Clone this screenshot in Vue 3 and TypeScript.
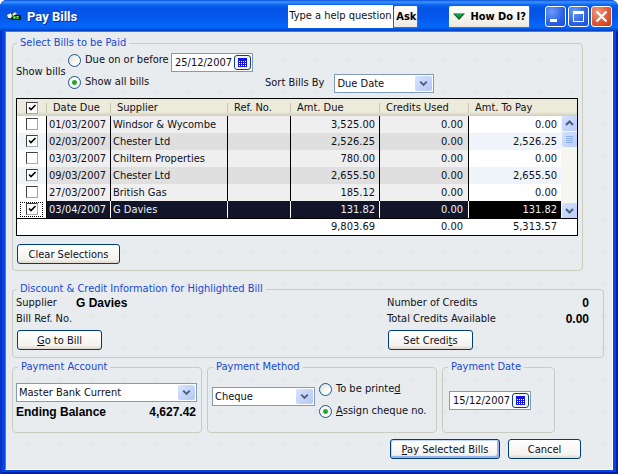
<script setup lang="ts">
import { computed, ref } from 'vue'

interface Bill {
  paid: boolean
  due: string
  supplier: string
  refNo: string
  amount: string
  credits: string
  toPay: string
}

const bills = ref<Bill[]>([
  { paid: false, due: '01/03/2007', supplier: 'Windsor & Wycombe', refNo: '', amount: '3,525.00', credits: '0.00', toPay: '0.00' },
  { paid: true, due: '02/03/2007', supplier: 'Chester Ltd', refNo: '', amount: '2,526.25', credits: '0.00', toPay: '2,526.25' },
  { paid: false, due: '03/03/2007', supplier: 'Chiltern Properties', refNo: '', amount: '780.00', credits: '0.00', toPay: '0.00' },
  { paid: true, due: '09/03/2007', supplier: 'Chester Ltd', refNo: '', amount: '2,655.50', credits: '0.00', toPay: '2,655.50' },
  { paid: false, due: '27/03/2007', supplier: 'British Gas', refNo: '', amount: '185.12', credits: '0.00', toPay: '0.00' },
  { paid: true, due: '03/04/2007', supplier: 'G Davies', refNo: '', amount: '131.82', credits: '0.00', toPay: '131.82' },
])

const current = ref(5)
const selectAll = ref(true)
const help = ref('Type a help question')
const show = ref('all')
const dueBefore = ref('25/12/2007')
const sortBy = ref('Due Date')
const account = ref('Master Bank Current')
const method = ref('Cheque')
const cheque = ref('assign')
const payDate = ref('15/12/2007')

const highlighted = computed(() => bills.value[current.value])

function clearSelections(): void {
  selectAll.value = false
  bills.value.forEach((b) => (b.paid = false))
}
</script>

<template>
  <div class="window">
    <header class="titlebar">
      <svg class="app-icon" width="15" height="11" viewBox="0 0 15 11" aria-hidden="true">
        <path d="M0 5 L4 2 L8 1 L10 4 L14 4 L14 9 L5 9 L3 7 L1 8 Z" fill="#101810" />
        <path d="M0 4 L4 2 L5 5 L4 7 L1 7 Z" fill="#f4f4ec" />
        <path d="M5 3 L8 1 L10 3 L6 5 Z" fill="#d8e4d0" />
        <path d="M5 5 H12 V8 H6 Z" fill="#2f9a3a" />
        <path d="M7 6 H8 V7 H7 Z M10 5 H11 V6 H10 Z" fill="#c8f0c0" />
      </svg>
      <h1>Pay Bills</h1>
      <div class="help">
        <input v-model="help" class="help-input" type="text" aria-label="Help question" />
        <button type="button" class="ask">Ask</button>
      </div>
      <button type="button" class="how">
        <svg width="12" height="7" viewBox="0 0 12 7" aria-hidden="true">
          <path d="M0 .5 H12 L6 7 Z" fill="#0c5c28" />
          <path d="M2 1 H10 L6 5 Z" fill="#12a04a" />
        </svg>
        How Do I?
      </button>
      <div class="controls">
        <button type="button" class="ctl" aria-label="Minimize">
          <svg width="18" height="18" viewBox="0 0 18 18"><path d="M4 12 H11 V15 H4 Z" fill="#fff" /></svg>
        </button>
        <button type="button" class="ctl" aria-label="Maximize">
          <svg width="18" height="18" viewBox="0 0 18 18"><path d="M4 4 H15 V15 H4 Z M5 7 V14 H14 V7 Z" fill="#fff" fill-rule="evenodd" /></svg>
        </button>
        <button type="button" class="ctl close" aria-label="Close">
          <svg width="18" height="18" viewBox="0 0 18 18"><path d="M4.500 4.500 L14.500 14.500 M14.500 4.500 L4.500 14.500" stroke="#fff" stroke-width="2.200" /></svg>
        </button>
      </div>
    </header>

    <main class="client">
      <fieldset class="bills">
        <legend>Select Bills to be Paid</legend>
        <div class="filters">
          <span class="show">Show bills</span>
          <label class="radio"><input v-model="show" type="radio" name="show" value="due" />Due on or before</label>
          <div class="date">
            <input v-model="dueBefore" type="text" aria-label="Due on or before date" />
            <button type="button" aria-label="Choose due date">
              <svg width="9" height="9" viewBox="0 0 9 9"><path d="M0 0 H9 V9 H0 Z" fill="#1414e6" /><path d="M1 3.500 H8 M1 5.500 H8 M1 7.500 H8" stroke="#fff" stroke-dasharray="1 1" /></svg>
            </button>
          </div>
          <label class="radio row2"><input v-model="show" type="radio" name="show" value="all" />Show all bills</label>
          <div class="sort">
            <label for="sort">Sort Bills By</label>
            <div class="select">
              <select id="sort" v-model="sortBy"><option>Due Date</option></select>
              <svg class="arrow" viewBox="0 0 17 16"><path d="M5 6 L8.500 9.500 L12 6" fill="none" stroke="#4d6185" stroke-width="2.200" /></svg>
            </div>
          </div>
        </div>

        <table>
          <colgroup>
            <col class="c-check" /><col class="c-date" /><col /><col class="c-ref" />
            <col class="c-amt" /><col class="c-amt" /><col class="c-pay" /><col class="c-scroll" />
          </colgroup>
          <thead>
            <tr>
              <th class="check"><input v-model="selectAll" type="checkbox" aria-label="Select all" /></th>
              <th>Date Due</th>
              <th>Supplier</th>
              <th>Ref. No.</th>
              <th>Amt. Due</th>
              <th>Credits Used</th>
              <th colspan="2">Amt. To Pay</th>
            </tr>
          </thead>
          <tbody>
            <tr v-for="(b, i) in bills" :key="b.due" :class="{ current: i === current }" @click="current = i">
              <td class="check white"><span class="focus"><input v-model="b.paid" type="checkbox" :aria-label="'Pay ' + b.supplier" /></span></td>
              <td class="day">{{ b.due }}</td>
              <td>{{ b.supplier }}</td>
              <td>{{ b.refNo }}</td>
              <td class="num">{{ b.amount }}</td>
              <td class="num used">{{ b.credits }}</td>
              <td class="num white pay">{{ b.toPay }}</td>
              <td v-if="i === 0" class="scroll" :rowspan="bills.length">
                <div class="bar">
                  <button type="button" aria-label="Scroll up"><svg width="15" height="15" viewBox="0 0 15 15"><path d="M4 9 L7.500 5.500 L11 9" fill="none" stroke="#4d6185" stroke-width="2.200" /></svg></button>
                  <span class="thumb"><svg width="15" height="15" viewBox="0 0 15 15"><path d="M4 4.500 H11 M4 6.500 H11 M4 8.500 H11 M4 10.500 H11" stroke="#8fb0f0" /></svg></span>
                  <button type="button" class="down" aria-label="Scroll down"><svg width="15" height="15" viewBox="0 0 15 15"><path d="M4 6 L7.500 9.500 L11 6" fill="none" stroke="#4d6185" stroke-width="2.200" /></svg></button>
                </div>
              </td>
            </tr>
          </tbody>
          <tfoot>
            <tr>
              <td colspan="4"></td>
              <td class="num">9,803.69</td>
              <td class="num used">0.00</td>
              <td class="num pay">5,313.57</td>
              <td></td>
            </tr>
          </tfoot>
        </table>
        <button type="button" class="btn clear" @click="clearSelections">Clear Selections</button>
      </fieldset>

      <fieldset class="info">
        <legend>Discount &amp; Credit Information for Highlighted Bill</legend>
        <div class="info-cols">
          <div class="info-left">
            <dl>
              <dt>Supplier</dt><dd>{{ highlighted.supplier }}</dd>
              <dt>Bill Ref. No.</dt><dd>{{ highlighted.refNo }}</dd>
            </dl>
            <button type="button" class="btn goto"><u>G</u>o to Bill</button>
          </div>
          <div class="info-right">
            <dl>
              <dt>Number of Credits</dt><dd>0</dd>
              <dt>Total Credits Available</dt><dd>0.00</dd>
            </dl>
            <button type="button" class="btn goto">Set Credi<u>t</u>s</button>
          </div>
        </div>
      </fieldset>

      <div class="payment">
        <fieldset>
          <legend>Payment Account</legend>
          <div class="account">
            <div class="select">
              <select v-model="account" aria-label="Payment Account"><option>Master Bank Current</option></select>
              <svg class="arrow" viewBox="0 0 17 16"><path d="M5 6 L8.500 9.500 L12 6" fill="none" stroke="#4d6185" stroke-width="2.200" /></svg>
            </div>
            <p class="balance"><span>Ending Balance</span><span>4,627.42</span></p>
          </div>
        </fieldset>
        <fieldset>
          <legend>Payment Method</legend>
          <div class="method">
            <div class="select">
              <select v-model="method" aria-label="Payment Method"><option>Cheque</option></select>
              <svg class="arrow" viewBox="0 0 17 16"><path d="M5 6 L8.500 9.500 L12 6" fill="none" stroke="#4d6185" stroke-width="2.200" /></svg>
            </div>
            <div class="choices">
              <label class="radio"><input v-model="cheque" type="radio" name="cheque" value="print" /><span>To be printe<u>d</u></span></label>
              <label class="radio"><input v-model="cheque" type="radio" name="cheque" value="assign" /><span><u>A</u>ssign cheque no.</span></label>
            </div>
          </div>
        </fieldset>
        <fieldset>
          <legend>Payment Date</legend>
          <div class="when">
            <div class="date">
              <input v-model="payDate" type="text" aria-label="Payment Date" />
              <button type="button" aria-label="Choose payment date">
                <svg width="9" height="9" viewBox="0 0 9 9"><path d="M0 0 H9 V9 H0 Z" fill="#1414e6" /><path d="M1 3.500 H8 M1 5.500 H8 M1 7.500 H8" stroke="#fff" stroke-dasharray="1 1" /></svg>
              </button>
            </div>
          </div>
        </fieldset>
      </div>

      <footer class="actions">
        <button type="button" class="btn default"><u>P</u>ay Selected Bills</button>
        <button type="button" class="btn cancel">Cancel</button>
      </footer>
    </main>
  </div>
</template>

<style>
body {
  background: #fff;
}
</style>

<style scoped>
* {
  box-sizing: border-box;
}

.window {
  display: flex;
  flex-direction: column;
  min-height: 100vh;
  padding: 0 5px 4px;
  border-radius: 7px 7px 0 0;
  background: #0844e0;
  box-shadow: inset 2px 0 #0830c8, inset -2px -2px #0420a0;
  color: #101018;
  font: 11px/14px "DejaVu Sans Condensed", "DejaVu Sans", sans-serif;
}

button,
input,
select {
  font: inherit;
  color: inherit;
  margin: 0;
}

/* Title bar */
.titlebar {
  display: flex;
  align-items: center;
  height: 31px;
  margin: 0 -5px;
  padding: 2px 6px 0 7px;
  border-radius: 7px 7px 0 0;
  background: linear-gradient(#0a50d8 0, #3c92ff 2px, #0a62f0 5px, #0454e4 9px, #0458ec 18px, #0668fc 26px, #0460f4 28px, #0340c0 31px);
}

.app-icon {
  flex: none;
}

h1 {
  flex: 1;
  margin: 0 0 0 5px;
  color: #fff;
  font: bold 13px/16px Roboto, "Open Sans", sans-serif;
  text-shadow: 1px 1px #0a2f90;
}

.help {
  display: flex;
  align-items: center;
  margin-right: 31px;
}

.help-input {
  width: 105px;
  height: 23px;
  padding: 0 1px 2px;
  border: 0;
  border-radius: 0;
  background: #fff;
}

.ask,
.how {
  display: flex;
  align-items: center;
  height: 22px;
  border: 1px solid #f8f8f4;
  border-right-color: #6a6a60;
  border-bottom-color: #6a6a60;
  border-radius: 2px;
  background: linear-gradient(#fefefe, #eceae0);
  color: #000;
  font-weight: bold;
}

.ask {
  margin-left: 1px;
  padding: 0 1px;
}

.how {
  gap: 5px;
  padding: 0 3px;
  margin-right: 15px;
}

.controls {
  display: flex;
  gap: 2px;
}

.ctl {
  display: flex;
  width: 21px;
  height: 21px;
  padding: 0;
  border: 1px solid #fff;
  border-radius: 3px;
  background: radial-gradient(circle at 30% 25%, #6c9cf8, #2c60e4 60%, #1c4cd4);
}

.ctl.close {
  background: radial-gradient(circle at 30% 25%, #f09878, #e05430 60%, #c43810);
}

/* Client area */
.client {
  flex: 1;
  padding: 4px 8px 8px 6px;
  border: 1px solid #77756a;
  border-right-color: #fff;
  border-bottom-color: #fff;
  background: #e8ecef radial-gradient(circle at 22px 28px, #e4e7ea 2px, transparent 4px) 0 0 / 32px 32px;
}

fieldset {
  min-width: 0;
  margin: 0;
  padding: 0;
  border: 1px solid #cbcbbf;
  border-radius: 4px;
}

legend {
  margin-left: 5px;
  padding: 0 3px;
  color: #1848d4;
}

.bills > legend,
.info > legend {
  margin-left: 1px;
}

.bills {
  margin-right: 21px;
  padding: 0 4px 6px 3px;
}

.filters {
  display: grid;
  grid-template-columns: 52px 100px auto 1fr;
  grid-template-rows: 22px 22px;
  align-items: start;
  margin-bottom: 4px;
}

.show {
  grid-row: 1 / 3;
  align-self: center;
}

.filters .date {
  justify-self: start;
  margin-top: 3px;
  margin-left: 3px;
}

.radio {
  display: flex;
  align-items: center;
  gap: 4px;
  height: 20px;
  white-space: nowrap;
}

.row2 {
  grid-area: 2 / 2;
}

.radio input {
  appearance: none;
  flex: none;
  width: 13px;
  height: 13px;
  border: 1px solid #1f5280;
  border-radius: 50%;
  background: linear-gradient(135deg, #dcdcd4, #fff 70%);
}

.radio input:checked {
  background: radial-gradient(circle, #22a022 0, #2cac2c 2px, #fafafa 3px);
}

.date {
  display: flex;
  align-items: center;
  width: 82px;
  height: 19px;
  border: 1px solid #7f9db9;
  background: #fff;
}

.date input {
  flex: 1;
  min-width: 0;
  height: 17px;
  padding: 0 0 0 3px;
  border: 0;
  background: none;
}

.date button {
  display: flex;
  flex: none;
  align-items: center;
  justify-content: center;
  width: 17px;
  height: 15px;
  margin-right: 1px;
  padding: 0;
  border: 1px solid #16407c;
  border-radius: 3px;
  background: #f4f4f0;
}

.sort {
  grid-area: 2 / 4;
  display: flex;
  align-items: center;
  gap: 10px;
  margin-left: 12px;
}

.filters .sort .select {
  width: 100px;
  margin-top: 2px;
}

.select {
  position: relative;
  height: 19px;
  border: 1px solid #7f9db9;
  background: #fff;
}

.select select {
  appearance: none;
  display: block;
  width: 100%;
  height: 17px;
  padding: 0 18px 0 2px;
  border: 0;
  border-radius: 0;
  background: none;
}

.arrow {
  position: absolute;
  top: 1px;
  right: 1px;
  width: 17px;
  height: 15px;
  border-radius: 2px;
  background: linear-gradient(135deg, #d8e4fe, #b4c8f4);
  pointer-events: none;
}

/* Bill table */
table {
  width: 100%;
  border: 1px solid #000;
  border-spacing: 0;
  table-layout: fixed;
  background: #fff;
}

.c-check { width: 30px; }
.c-date { width: 64px; }
.c-ref { width: 63px; }
.c-amt { width: 89px; }
.c-pay { width: 92px; }
.c-scroll { width: 16px; }

th,
td {
  height: 17px;
  padding: 0 2px;
  font-weight: normal;
  text-align: left;
  white-space: nowrap;
  overflow: hidden;
}

th {
  padding: 0 6px;
  background: linear-gradient(to left, #c6c4b4 1px, transparent 1px) 0 4px / 100% 10px no-repeat, linear-gradient(#ebeadb 13px, #cfccba 17px);
}

th:last-child {
  background: linear-gradient(#ebeadb 13px, #cfccba 17px);
}

tbody td {
  border-right: 1px solid #000;
  background: #efefef;
}

tbody tr:nth-child(even) td {
  background: #dfdfdf;
}

tbody tr td.white {
  background: #fff;
}

tbody tr:nth-child(even) td.white {
  background: #eff4fa;
}

td.num {
  text-align: right;
  padding-right: 4px;
}

td.used {
  padding-right: 5px;
}

td.pay {
  padding-right: 4px;
  border-right: 0;
}

tbody tr.current td {
  border-right-color: #fff;
  background: #12152a;
  color: #f0f0f0;
}

tbody tr.current td.white.pay {
  background: #000;
}

tbody tr.current td.check {
  border-right-color: #000;
  background: #fff;
}

.check,
th.check {
  padding: 0;
  text-align: center;
}

.focus {
  display: block;
  width: 23px;
  height: 15px;
  margin: 0 auto;
  padding-top: 1px;
}

.current .focus {
  outline: 1px dotted #000;
  outline-offset: -1px;
}

.check input {
  appearance: none;
  display: block;
  width: 12px;
  height: 12px;
  margin: 0 auto;
  border: 1px solid #404040;
  border-right-color: #a8a8a0;
  border-bottom-color: #a8a8a0;
  background: #fff;
}

.check input:checked {
  background: #fff url("data:image/svg+xml,%3Csvg xmlns='http://www.w3.org/2000/svg' viewBox='0 0 10 10'%3E%3Cpath d='M2 4.500 L4 6.500 L8.500 2' fill='none' stroke='%23000' stroke-width='1.600'/%3E%3C/svg%3E");
}

tbody tr td.scroll {
  height: 100%;
  padding: 0;
  border: 0;
  background: #f6f5f0;
}

.bar {
  display: flex;
  flex-direction: column;
  align-items: center;
  height: 102px;
}

.bar button,
.thumb {
  display: flex;
  width: 15px;
  height: 15px;
  padding: 0;
  border: 0;
  border-radius: 2px;
  background: linear-gradient(135deg, #d4e0fe, #b8ccf8);
}

.thumb {
  margin-top: 1px;
}

.bar .down {
  margin-top: auto;
}

tfoot td {
  border-top: 1px solid #000;
}

tfoot td.num {
  padding-right: 5px;
}

tfoot td.used {
  padding-right: 6px;
}

tfoot td.pay {
  padding-right: 4px;
}

/* Buttons */
.btn {
  display: block;
  height: 20px;
  padding: 0 4px;
  border: 1px solid #003c74;
  border-radius: 3px;
  background: linear-gradient(#fff, #f4f3ee 80%, #dcd8cc);
  line-height: 17px;
  text-align: center;
  white-space: nowrap;
}

.clear {
  width: 103px;
  margin: 8px 0 0 1px;
}

.goto {
  width: 85px;
}

.default {
  width: 110px;
  box-shadow: inset 1px 1px #c4d6f6, inset -2px -2px #98b4ea;
}

.cancel {
  width: 73px;
}

/* Highlighted bill */
.info {
  margin-top: 11px;
  padding: 0 14px 7px 3px;
}

.info-cols {
  display: flex;
  justify-content: space-between;
}

dl {
  display: grid;
  grid-template-columns: 60px 1fr;
  row-gap: 2px;
  margin: 0 0 4px;
  line-height: 14px;
}

dt {
  white-space: nowrap;
}

dd {
  min-height: 14px;
  margin: 0;
  color: #000;
  font: bold 12px/14px "Liberation Sans", Arial, sans-serif;
}

.info .goto {
  margin-left: 1px;
}

.info-right {
  width: 202px;
}

.info-right dl {
  grid-template-columns: 1fr auto;
}

.info-right dd {
  text-align: right;
}

/* Payment row */
.payment {
  display: grid;
  grid-template-columns: 190fr 230fr 113fr;
  gap: 5px;
  margin: 2px 49px 0 0;
}

.account {
  padding: 9px 4px 0 3px;
}

.balance {
  display: flex;
  justify-content: space-between;
  margin: 3px 0 0;
  padding: 0 1px 0 0;
  color: #000;
  font: bold 12px/14px "Liberation Sans", Arial, sans-serif;
}

.method {
  display: flex;
  gap: 4px;
  padding: 5px 4px 11px;
}

.method .select {
  width: 103px;
  margin-top: 8px;
}

.choices {
  display: grid;
  gap: 2px;
}

.when {
  padding: 17px 6px;
}

.actions {
  display: flex;
  justify-content: flex-end;
  gap: 8px;
  margin: 6px 23px 0 0;
}
</style>
